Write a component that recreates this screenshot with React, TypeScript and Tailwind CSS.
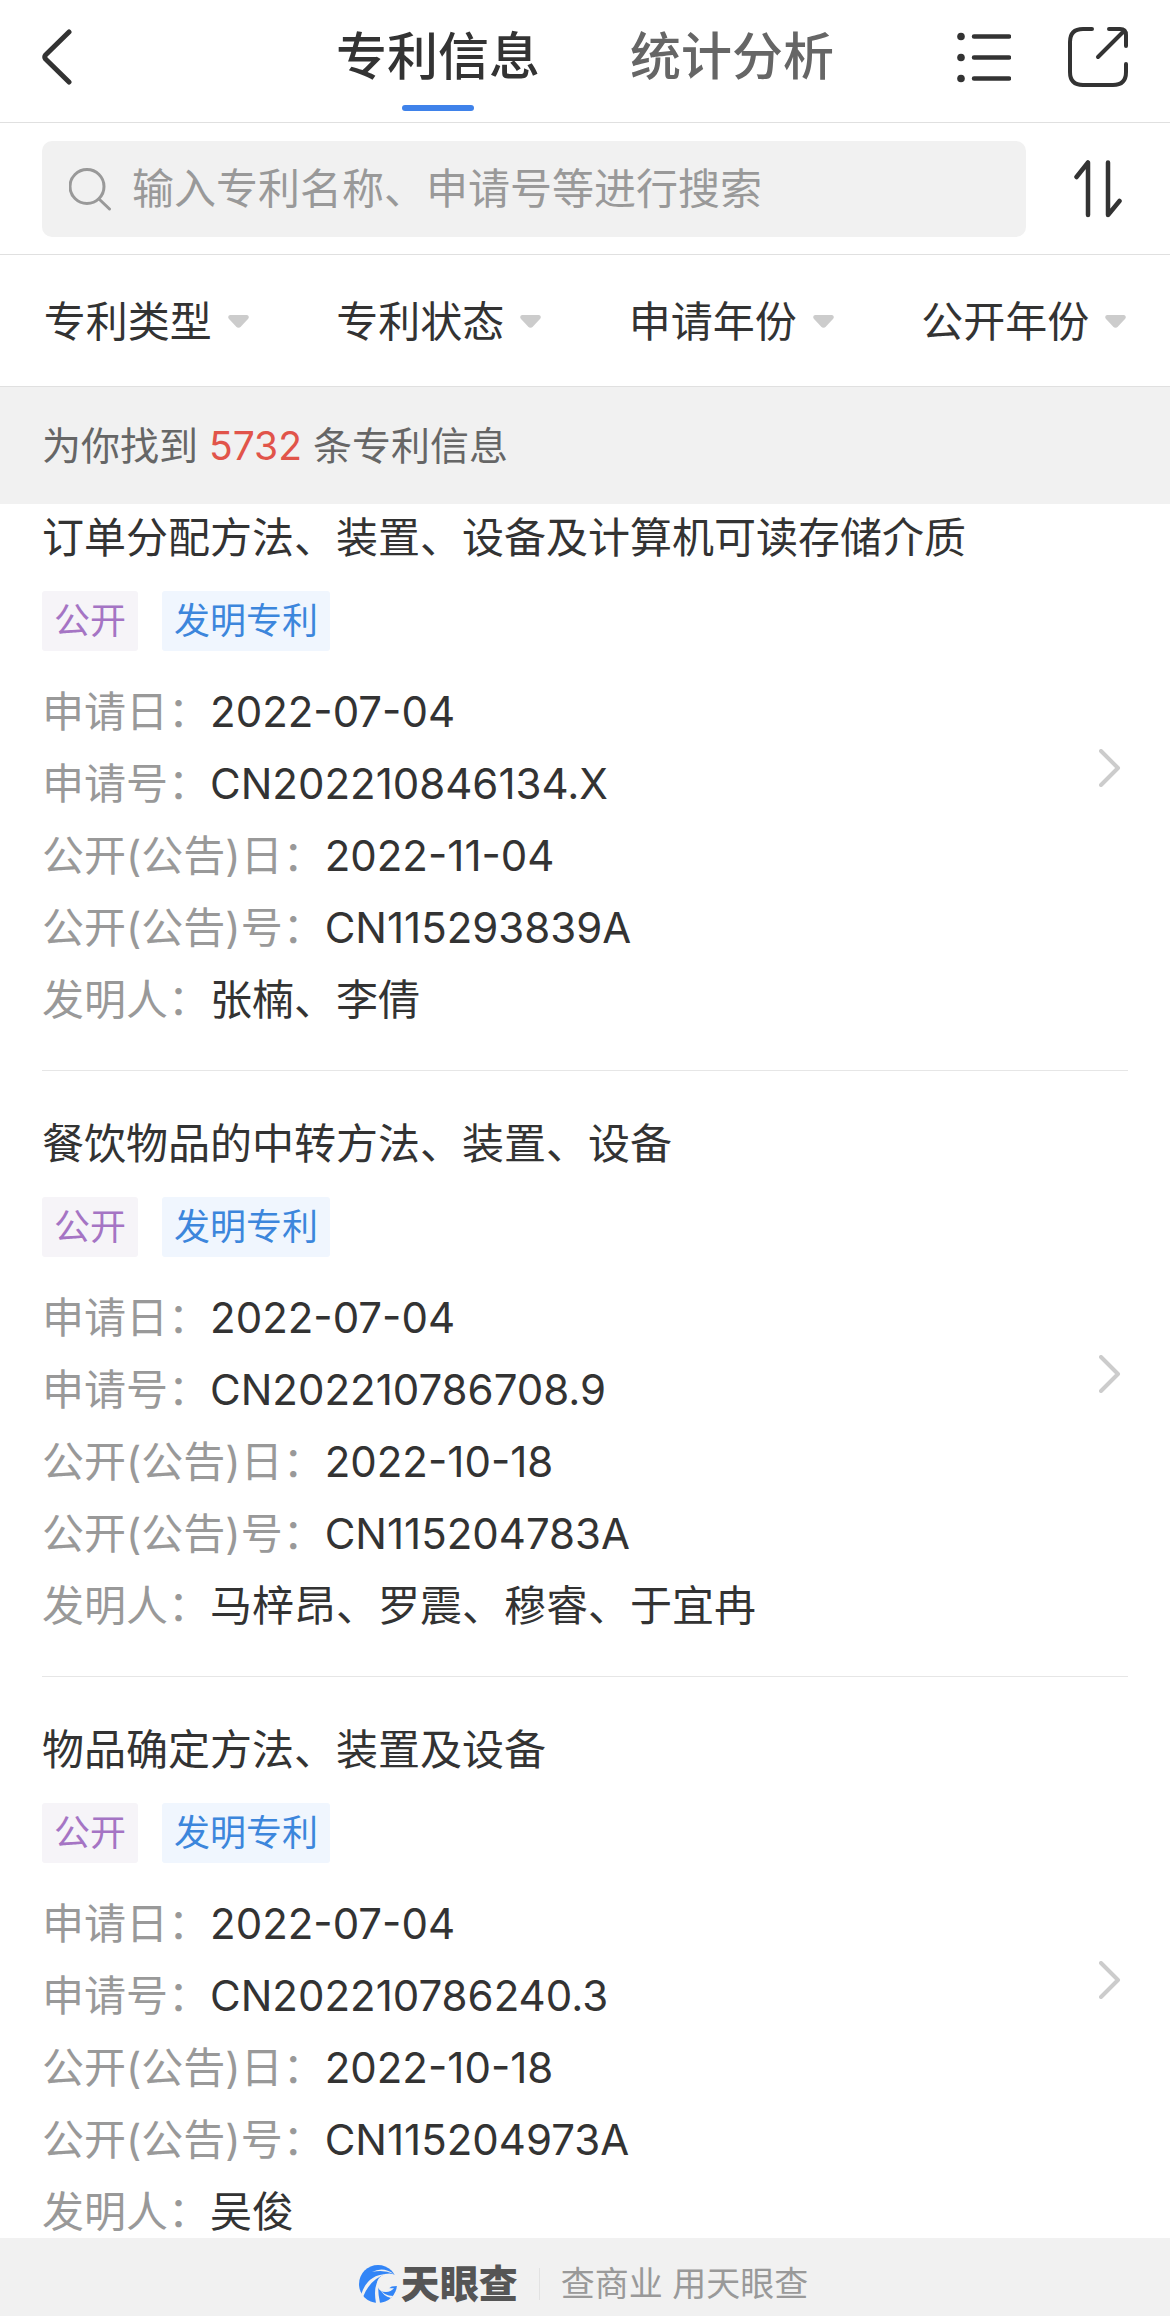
import type { ReactNode } from 'react';

type Patent = {
  title: string;
  tags: { text: string; kind: 'status' | 'type' }[];
  fields: { label: string; value: string }[];
};

const makePatent = (
  title: string,
  applyDate: string,
  applyNo: string,
  publishDate: string,
  publishNo: string,
  inventors: string,
): Patent => ({
  title,
  tags: [
    { text: '公开', kind: 'status' },
    { text: '发明专利', kind: 'type' },
  ],
  fields: [
    { label: '申请日：', value: applyDate },
    { label: '申请号：', value: applyNo },
    { label: '公开(公告)日：', value: publishDate },
    { label: '公开(公告)号：', value: publishNo },
    { label: '发明人：', value: inventors },
  ],
});

const patents: Patent[] = [
  makePatent('订单分配方法、装置、设备及计算机可读存储介质', '2022-07-04', 'CN202210846134.X', '2022-11-04', 'CN115293839A', '张楠、李倩'),
  makePatent('餐饮物品的中转方法、装置、设备', '2022-07-04', 'CN202210786708.9', '2022-10-18', 'CN115204783A', '马梓昂、罗震、穆睿、于宜冉'),
  makePatent('物品确定方法、装置及设备', '2022-07-04', 'CN202210786240.3', '2022-10-18', 'CN115204973A', '吴俊'),
];

const filters = ['专利类型', '专利状态', '申请年份', '公开年份'];

const Tab = ({ active, children }: { active?: boolean; children: ReactNode }) => (
  <button
    type="button"
    role="tab"
    aria-selected={!!active}
    className={`flex flex-col items-center gap-[18px] text-[51px] leading-[60px] font-medium ${active ? 'text-[#333]' : 'text-[#666]'}`}
  >
    {children}
    {active && <span className="h-[6px] w-[72px] rounded-full bg-[#3f82ea]" />}
  </button>
);

const Header = () => (
  <header className="grid shrink-0 grid-cols-[1fr_auto_1fr] items-start border-b border-[#e0e0e0] px-[42px] pt-[27px] pb-[11px] text-[#333]">
    <button type="button" aria-label="返回" className="justify-self-start">
      <svg width="30" height="60" viewBox="0 0 30 60" fill="none" stroke="currentColor" strokeWidth="5" strokeLinecap="round" strokeLinejoin="round">
        <path d="M27 5 3.500 28Q2 30 3.500 32L27 55" />
      </svg>
    </button>

    <div role="tablist" className="flex items-start gap-[90px]">
      <Tab active>专利信息</Tab>
      <Tab>统计分析</Tab>
    </div>

    <div className="flex gap-[57px] justify-self-end">
      <button type="button" aria-label="列表">
        <svg width="54" height="60" viewBox="0 0 54 60" fill="none" stroke="currentColor" strokeWidth="4.500" strokeLinecap="round">
          <path d="M17 9.500H52M17 30.500H52M17 51.500H52" />
          <g fill="currentColor" stroke="none">
            <circle cx="4" cy="9.500" r="3.800" />
            <circle cx="4" cy="30.500" r="3.800" />
            <circle cx="4" cy="51.500" r="3.800" />
          </g>
        </svg>
      </button>
      <button type="button" aria-label="分享">
        <svg width="60" height="60" viewBox="0 0 60 60" fill="none" stroke="currentColor" strokeWidth="4" strokeLinecap="round" strokeLinejoin="round">
          <path d="M24 2H15Q2 2 2 15V45Q2 58 15 58H45Q58 58 58 45V37" />
          <path d="M41 2H52Q58 2 58 8V19M56 4 30 30" />
        </svg>
      </button>
    </div>
  </header>
);

const SearchBar = () => (
  <div className="flex shrink-0 items-center border-b border-[#e0e0e0] pt-[18px] pr-[48px] pb-[17px] pl-[42px]">
    <label className="flex h-[96px] flex-1 items-center gap-[20px] rounded-[10px] bg-[#f1f1f1] px-[27px] text-[#999]">
      <svg width="43" height="43" viewBox="0 0 43 43" fill="none" stroke="currentColor" strokeWidth="3" strokeLinecap="round">
        <circle cx="18" cy="18.500" r="17" />
        <path d="M30 31 40.500 41" />
      </svg>
      <input
        type="search"
        aria-label="搜索专利"
        placeholder="输入专利名称、申请号等进行搜索"
        className="min-w-0 flex-1 bg-transparent text-[42px] leading-[60px] text-[#333] outline-none placeholder:text-[#999]"
      />
    </label>
    <button type="button" aria-label="排序" className="ml-[48px] text-[#333]">
      <svg width="48" height="58" viewBox="0 0 48 58" fill="none" stroke="currentColor" strokeWidth="4.500" strokeLinecap="round" strokeLinejoin="round">
        <path d="M2.500 17 14 2.500V55" />
        <path d="M34 2.500V55L45.500 41" />
      </svg>
    </button>
  </div>
);

const FilterBar = () => (
  <div className="grid shrink-0 grid-cols-4 border-b border-[#e0e0e0]">
    {filters.map(name => (
      <label key={name} className="flex h-[131px] items-center justify-center gap-[15px] pt-[2px]">
        <select aria-label={name} className="appearance-none bg-transparent text-[42px] leading-[60px] text-[#333] outline-none">
          <option>{name}</option>
        </select>
        <svg width="21" height="13" viewBox="0 0 21 13" fill="#ccc" className="pointer-events-none">
          <path d="M2 0H19Q22 1 20 4L13 11.500Q10.500 14 8 11.500L1 4Q-1 1 2 0Z" />
        </svg>
      </label>
    ))}
  </div>
);

const PatentItem = ({ patent }: { patent: Patent }) => (
  <li className="flex items-center justify-between border-b border-[#e6e6e6] pr-[7px]">
    <div className="pt-[43px] pb-[34px] text-[42px] text-[#333]">
      <h2 className="leading-[60px]">{patent.title}</h2>

      <div className="mt-[23px] mb-[25px] flex gap-[24px]">
        {patent.tags.map(tag => (
          <span
            key={tag.text}
            className={`rounded-[3px] px-[12px] text-[36px] leading-[60px] ${
              tag.kind === 'status' ? 'bg-[#f6f4f8] text-[#a574c4]' : 'bg-[#f0f6fe] text-[#3c86dc]'
            }`}
          >
            {tag.text}
          </span>
        ))}
      </div>

      <dl className="leading-[72px]">
        {patent.fields.map(field => (
          <div key={field.label} className="flex">
            <dt className="text-[#999]">{field.label}</dt>
            <dd>{field.value}</dd>
          </div>
        ))}
      </dl>
    </div>

    <svg width="22" height="38" viewBox="0 0 22 38" fill="none" stroke="#ccc" strokeWidth="4" strokeLinecap="round" strokeLinejoin="round" className="shrink-0">
      <path d="M2 2 19 19 2 36" />
    </svg>
  </li>
);

const Logo = () => (
  <svg width="38" height="38" viewBox="0 0 38 38">
    <circle cx="19" cy="19" r="19" fill="#3285f7" />
    <g fill="#f1f1f1">
      <path d="M39 12Q34 7 26 9Q18 12 18 19Q19 27 27 27Q32 27 35 23Q30 24 27 22L39 21Z" />
      <path d="M13 7Q24 1 35 9Q24 4 13 7Z" />
      <path d="M2 30Q8 10 27 9Q11 14 4 32Z" />
      <path d="M17 38Q14 22 20 14Q18 25 21 38Z" />
      <path d="M21 24Q25 31 34 31L32 33Q24 31 21 24Z" />
    </g>
    <circle cx="27" cy="17" r="7" fill="#f1f1f1" />
  </svg>
);

const Footer = () => (
  <footer className="flex h-[78px] shrink-0 items-center justify-center bg-[#f1f1f1] pt-[13px]">
    <Logo />
    <span className="ml-[4px] text-[39px] leading-[48px] font-black text-[#555]">天眼查</span>
    <span className="mx-[21px] h-[32px] w-px bg-[#e2e2e2]" />
    <span className="pr-[3px] text-[34px] leading-[48px] text-[#999]">查商业 用天眼查</span>
  </footer>
);

export default function App() {
  return (
    <div className="flex h-screen flex-col bg-white font-['Inter','Noto_Sans_CJK_SC',sans-serif]">
      <Header />
      <SearchBar />
      <FilterBar />
      <p className="z-10 shrink-0 bg-[#f1f1f1] px-[42px] py-[29px] text-[39px] leading-[59px] text-[#666]">
        为你找到 <span className="text-[#e1544a]">5732</span> 条专利信息
      </p>
      <main className="min-h-0 flex-1 overflow-y-auto [scrollbar-width:none]">
        {/* list rests slightly scrolled under the summary bar */}
        <ul className="-mt-[39px] px-[42px]">
          {patents.map(patent => (
            <PatentItem key={patent.title} patent={patent} />
          ))}
        </ul>
      </main>
      <Footer />
    </div>
  );
}
